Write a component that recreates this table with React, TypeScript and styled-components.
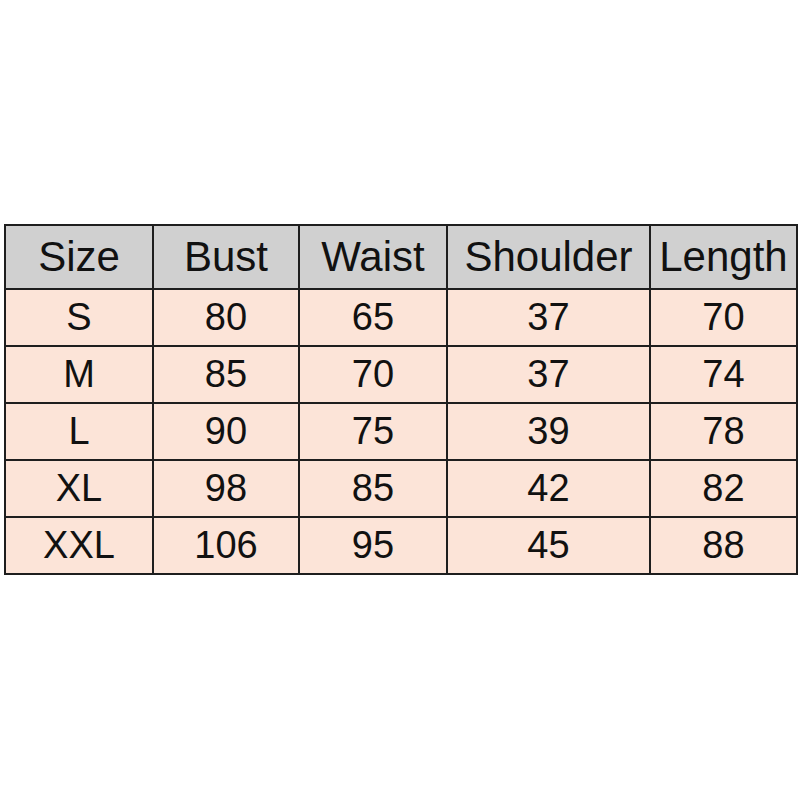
import type React from "react";
import styled, { createGlobalStyle } from "styled-components";

const GlobalStyle = createGlobalStyle`
  html, body {
    margin: 0;
    padding: 0;
    background: #ffffff;
  }
`;

const Page = styled.div`
  width: 800px;
  height: 800px;
  padding: 224px 0 0 4px;
  box-sizing: border-box;
  background: #ffffff;
`;

const SizeTable = styled.table`
  border-collapse: collapse;
  table-layout: fixed;
  width: 792px;
  font-family: "Liberation Sans", Arial, sans-serif;
  color: #111111;
`;

const HeadCell = styled.th`
  height: 62px;
  padding: 0;
  border: 2px solid #1e1e1e;
  background: #d0d0d0;
  font-size: 42px;
  line-height: 48px;
  font-weight: 400;
  text-align: center;
  white-space: nowrap;
`;

const Cell = styled.td`
  height: 55px;
  padding: 0;
  border: 2px solid #1e1e1e;
  background: #fce4d8;
  font-size: 38px;
  text-align: center;
  white-space: nowrap;
`;

const columns = [
  { label: "Size", width: 148 },
  { label: "Bust", width: 146 },
  { label: "Waist", width: 148 },
  { label: "Shoulder", width: 203 },
  { label: "Length", width: 147 },
];

const rows = [
  ["S", "80", "65", "37", "70"],
  ["M", "85", "70", "37", "74"],
  ["L", "90", "75", "39", "78"],
  ["XL", "98", "85", "42", "82"],
  ["XXL", "106", "95", "45", "88"],
];

const App: React.FC = () => {
  return (
    <>
      <GlobalStyle />
      <Page>
        <SizeTable>
          <colgroup>
            {columns.map((c) => (
              <col key={c.label} style={{ width: c.width }} />
            ))}
          </colgroup>
          <thead>
            <tr>
              {columns.map((c) => (
                <HeadCell key={c.label}>{c.label}</HeadCell>
              ))}
            </tr>
          </thead>
          <tbody>
            {rows.map((r) => (
              <tr key={r[0]}>
                {r.map((v, i) => (
                  <Cell key={i}>{v}</Cell>
                ))}
              </tr>
            ))}
          </tbody>
        </SizeTable>
      </Page>
    </>
  );
};

export default App;
